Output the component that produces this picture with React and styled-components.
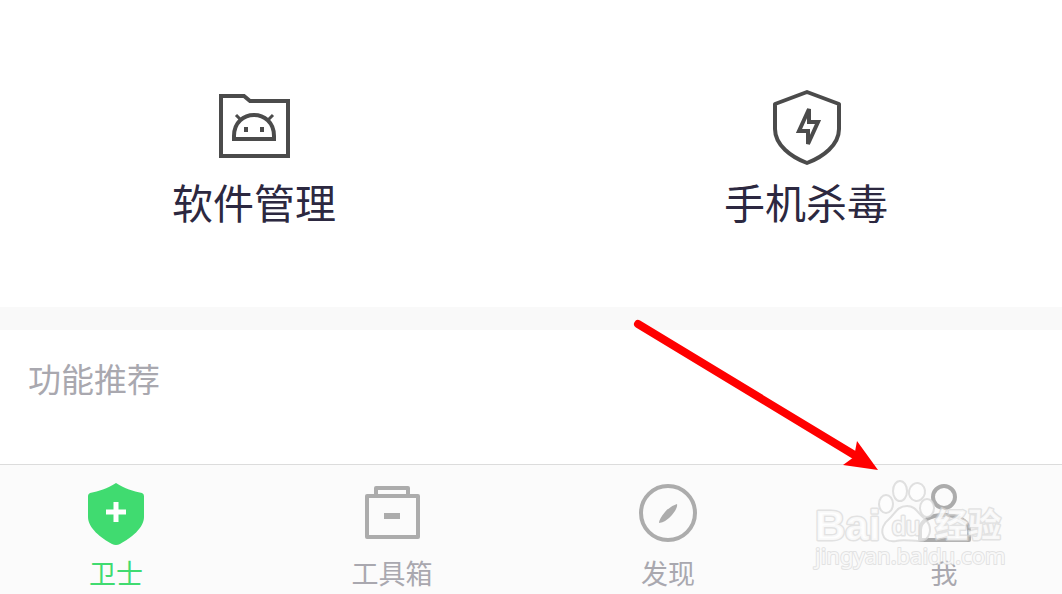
import React from "react";
import styled, { createGlobalStyle } from "styled-components";

const GlobalStyle = createGlobalStyle`
  * { box-sizing: border-box; }
  html, body, #root { height: 100%; }
  body {
    margin: 0;
    background: #fff;
    font-family: "Noto Sans CJK SC", "Noto Sans", sans-serif;
  }
`;

const Screen = styled.div`
  position: relative;
  display: flex;
  flex-direction: column;
  min-height: 100%;
  overflow: hidden;
`;

const Tools = styled.section`
  display: grid;
  grid-template-columns: 1fr 1fr;
  margin: 0 -20px 0 -22px;
  padding: 88px 0 76px;
`;

const Tool = styled.button`
  display: flex;
  flex-direction: column;
  align-items: center;
  gap: 5px;
  padding: 0;
  border: 0;
  background: none;
  color: #2c2840;
  font: inherit;
  font-size: 41px;
  line-height: 60px;
  cursor: pointer;
`;

const Recommend = styled.section`
  flex: 1;
  border-top: 23px solid #f9f9f9;
  padding: 23px 28px;
`;

const SectionTitle = styled.h2`
  margin: 0;
  color: #a9a8af;
  font-size: 33px;
  font-weight: 400;
  line-height: 50px;
`;

const TabBar = styled.nav`
  height: 130px;
  border-top: 1px solid #dcdcdc;
  background: #fbfbfb;
`;

const TabList = styled.div`
  display: grid;
  grid-template-columns: repeat(4, 1fr);
  margin: 0 -20px 0 -22px;
  padding-top: 16px;
`;

const Tab = styled.button`
  display: flex;
  flex-direction: column;
  align-items: center;
  gap: 6px;
  padding: 0;
  border: 0;
  background: none;
  color: ${(p) => (p.$active ? "#40db70" : "#a9a8af")};
  font: inherit;
  font-size: 27px;
  line-height: 40px;
  cursor: pointer;
`;

const Arrow = styled.svg`
  position: absolute;
  right: 182px;
  bottom: 122px;
`;

const Watermark = styled.svg`
  position: absolute;
  right: 52px;
  bottom: 18px;
  pointer-events: none;
`;

const FolderIcon = () => (
  <svg width="76" height="78" viewBox="0 0 76 78" fill="none" stroke="#4b4b4b" strokeWidth="4">
    <path d="M5 8H28L34 13H72V68H5Z" />
    <path d="M18 51V48C18 20 58 20 58 48V51Z" />
    <path d="M20 27L25 32M57 27L52 32" strokeWidth="3" />
    <path d="M30 39V44M46 39V44" strokeWidth="4" />
  </svg>
);

const ShieldBoltIcon = () => (
  <svg width="76" height="78" viewBox="0 0 76 78" fill="none" stroke="#4b4b4b" strokeWidth="4">
    <path d="M39 4L71 16V41C71 57 55 69 39 75C23 69 7 57 7 41V16Z" strokeLinejoin="round" />
    <path d="M41 21V34H50L40 56V43H31Z" />
  </svg>
);

const GuardIcon = () => (
  <svg width="64" height="66" viewBox="0 0 64 66">
    <path d="M32 2C41 8 49 10 58 12Q60 13 60 15V36C60 47 47 57 36 63Q32 65 28 63C17 57 4 47 4 36V15Q4 13 6 12C15 10 23 8 32 2Z" fill="#40db70" />
    <path d="M32 21V41M22 31H42" stroke="#fff" strokeWidth="5" />
  </svg>
);

const ToolboxIcon = () => (
  <svg width="64" height="66" viewBox="0 0 64 66" fill="none" stroke="#acacac" strokeWidth="4" strokeLinejoin="round">
    <path d="M7 15H58V56H7ZM16 15V7H48V15" />
    <path d="M24 35H40" strokeWidth="6" />
  </svg>
);

const CompassIcon = () => (
  <svg width="64" height="66" viewBox="0 0 64 66">
    <circle cx="32" cy="32" r="27" fill="none" stroke="#acacac" strokeWidth="4" />
    <path d="M41 23Q42 27 36 34Q30 41 23 42Q23 38 29 31Q34 25 41 23Z" fill="#acacac" />
  </svg>
);

const PersonIcon = () => (
  <svg width="64" height="66" viewBox="0 0 64 66" fill="none" stroke="#acacac" strokeWidth="4" strokeLinejoin="round">
    <circle cx="32" cy="16" r="11" />
    <path d="M8 59V49C8 40 18 34 32 34C46 34 57 40 57 49V59Z" />
  </svg>
);

const tools = [
  { label: "软件管理", Icon: FolderIcon },
  { label: "手机杀毒", Icon: ShieldBoltIcon },
];

const tabs = [
  { label: "卫士", Icon: GuardIcon, active: true },
  { label: "工具箱", Icon: ToolboxIcon },
  { label: "发现", Icon: CompassIcon },
  { label: "我", Icon: PersonIcon },
];

export default function App() {
  return (
    <>
      <GlobalStyle />
      <Screen>
        <Tools>
          {tools.map(({ label, Icon }) => (
            <Tool key={label} type="button">
              <Icon />
              {label}
            </Tool>
          ))}
        </Tools>
        <Recommend>
          <SectionTitle>功能推荐</SectionTitle>
        </Recommend>
        <TabBar>
          <TabList>
            {tabs.map(({ label, Icon, active }) => (
              <Tab key={label} type="button" $active={active} aria-current={active ? "page" : undefined}>
                <Icon />
                {label}
              </Tab>
            ))}
          </TabList>
        </TabBar>
        <Watermark width="200" height="100" viewBox="0 0 200 100" fill="#fff" stroke="#d8d8d8" strokeWidth="2">
          <g fillOpacity="0.6" strokeOpacity="0.8">
            <ellipse cx="76" cy="28" rx="7" ry="9" />
            <ellipse cx="90" cy="15" rx="7" ry="10" />
            <ellipse cx="107" cy="16" rx="8" ry="9" transform="rotate(12 107 16)" />
            <ellipse cx="117" cy="32" rx="7" ry="9" />
            <path d="M97 30C106 30 108 38 115 43C124 52 120 66 108 65C101 65 93 63 86 65C70 67 69 51 78 44C85 38 87 30 97 30Z" />
          </g>
          <g paintOrder="stroke" fillOpacity="0.8" strokeWidth="3" strokeLinejoin="round" strokeOpacity="0.7">
            <text x="5" y="64" fontFamily="Liberation Sans" fontWeight="700" fontSize="42">Bai</text>
            <text x="82" y="59" fontFamily="Liberation Sans" fontSize="25">du</text>
            <text x="125" y="61" fontFamily="Noto Sans CJK SC" fontWeight="700" fontSize="33">经验</text>
            <text x="5" y="88" fontFamily="Noto Sans" fontWeight="400" fontSize="22" strokeWidth="2">jingyan.baidu.com</text>
          </g>
        </Watermark>
        <Arrow width="250" height="160" viewBox="0 0 250 160" aria-hidden="true">
          <path d="M8 12L226 144" stroke="#f00" strokeWidth="8" strokeLinecap="round" />
          <path d="M227 129L248 158L213 153L224 145Z" fill="#f00" />
        </Arrow>
      </Screen>
    </>
  );
}
